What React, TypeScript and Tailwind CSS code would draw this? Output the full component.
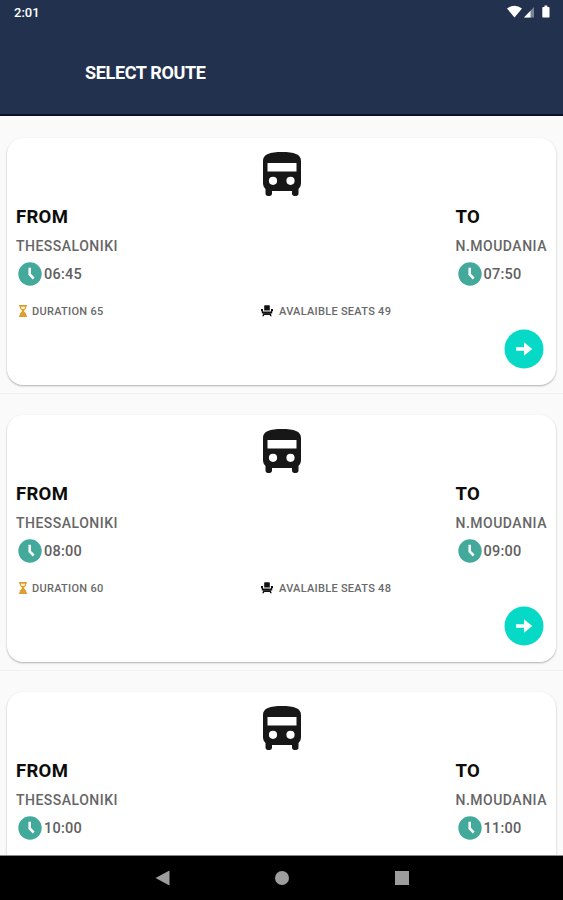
type Trip = { departs: string; arrives: string; duration?: number; seats?: number };

const trips: Trip[] = [
  { departs: "06:45", arrives: "07:50", duration: 65, seats: 49 },
  { departs: "08:00", arrives: "09:00", duration: 60, seats: 48 },
  { departs: "10:00", arrives: "11:00" },
];

function BusIcon() {
  return (
    <svg className="mx-auto block h-11 w-[38px]" viewBox="0 0 38 44" fill="#171717">
      <path
        fillRule="evenodd"
        d="M0 9C0 2 7 0 19 0s19 2 19 9v22c0 2.6-1 4.600-2.500 6v4.500c0 1.500-1 2.500-2.500 2.500h-1.500c-1.500 0-2.500-1-2.500-2.500V39H9v2.500C9 43 8 44 6.500 44H5c-1.500 0-2.500-1-2.500-2.500V37C1 35.600 0 33.600 0 31V9Zm4.500 2v8.500h29V11h-29ZM10 24.700a4.100 4.100 0 1 0 0 8.200 4.100 4.100 0 0 0 0-8.200Zm17.500 0a4.100 4.100 0 1 0 0 8.200 4.100 4.100 0 0 0 0-8.200Z"
      />
    </svg>
  );
}

function ClockIcon() {
  return (
    <svg className="h-6 w-6 shrink-0" viewBox="0 0 24 24">
      <circle cx="12" cy="12" r="11.700" fill="#43a99b" />
      <path d="M11.700 5.800v6.700l4 4" fill="none" stroke="#fff" strokeWidth="2.500" />
    </svg>
  );
}

function HourglassIcon() {
  return (
    <svg className="h-3 w-2 shrink-0" viewBox="0 0 8 12">
      <path d="M0 0h8v1.500H7.200v1.800L4.900 6l2.300 2.700v1.800H8V12H0v-1.500h.8V8.700L3.100 6 .8 3.300V1.500H0V0Z" fill="#dda02e" />
      <path d="M2 1.700h4v1.400L5.200 4H2.800L2 3.100V1.700Z" fill="#fff4d8" />
    </svg>
  );
}

function SeatIcon() {
  return (
    <svg className="h-3 w-3 shrink-0" viewBox="0 0 12 12" fill="#111">
      <path d="M3.200 1q0-.7.700-.7h4.200q.7 0 .7.700v4.500H3.200V1ZM0 4h2v2.500h8V4h2v2.300h-.8v2.200H.8V6.300H0V4Z" />
      <path d="M2.300 8.300h7.400l1 3H9.200l-.5-1.300H3.300l-.5 1.300H1.300l1-3Z" />
    </svg>
  );
}

function Stop({ label, city, time }: { label: string; city: string; time: string }) {
  return (
    <div>
      <h2 className="flex h-10 items-center pt-px text-[18.500px] font-bold leading-none tracking-[0.3px] text-[#0c0c0c]">{label}</h2>
      <p className="h-[17px] whitespace-nowrap text-[14px] font-medium leading-[19px] tracking-[0.500px] text-[#666]">{city}</p>
      <div className="mt-2 flex h-6 items-center gap-[2px] pl-[2px]">
        <ClockIcon />
        <span className="pt-[3px] text-[14.500px] font-medium leading-none tracking-[0.250px] text-[#606060]">{time}</span>
      </div>
    </div>
  );
}

function TripCard({ trip }: { trip: Trip }) {
  return (
    <li className="h-[277px] border-b border-[#f2f2f2] px-[7px] pt-[21px]">
      <article className="h-[247px] rounded-[16px] bg-white px-[9px] pt-[14px] shadow-[0_1px_2px_rgba(0,0,0,0.3)]">
        <BusIcon />
        <div className="mt-px flex justify-between">
          <Stop label="FROM" city="THESSALONIKI" time={trip.departs} />
          <div className="w-[91.500px]">
            <Stop label="TO" city="N.MOUDANIA" time={trip.arrives} />
          </div>
        </div>
        {trip.duration !== undefined && (
          <>
            <div className="mt-[17px] flex h-4 items-center text-[11px] font-medium leading-none tracking-[0.28px] text-[#696969]">
              <div className="flex w-[245px] items-center gap-[5px] pl-[3px]">
                <HourglassIcon />
                <span>DURATION {trip.duration}</span>
              </div>
              <div className="flex items-center gap-[6px]">
                <SeatIcon />
                <span>AVALAIBLE SEATS {trip.seats}</span>
              </div>
            </div>
            <button aria-label="Select trip" className="mr-[3px] ml-auto mt-[10px] flex h-10 w-10 items-center justify-center">
              <svg className="h-10 w-10" viewBox="0 0 40 40">
                <circle cx="20" cy="20" r="19.500" fill="#06d9c6" />
                <path d="M12 18.200h8V13.200l8.200 6.800-8.200 6.800v-5h-8v-3.600Z" fill="#fff" />
              </svg>
            </button>
          </>
        )}
      </article>
    </li>
  );
}

export default function App() {
  return (
    <div className="flex h-[900px] w-[563px] flex-col overflow-hidden bg-[#fafafa] font-['Roboto',sans-serif]">
      <header className="h-[116px] shrink-0 border-b-2 border-[#0b1029] bg-[#22314e] text-white">
        <div className="flex h-6 items-center justify-between pr-[11px] pl-[14px]">
          <span className="text-[13px] font-medium leading-none">2:01</span>
          <svg className="h-4 w-[46px]" viewBox="0 0 46 16" fill="#fff">
            <path d="M1 4.500Q8.500-1 16 4.500L8.500 13.500Z" />
            <path d="M18 13.500 28 3v10.500Z" opacity=".4" />
            <path d="M18 13.500 24.500 6.700v6.800Z" />
            <path d="M37 3h1.500V1.500h2.800V3h1.500q.7 0 .7.700v9.100q0 .7-.7.700H37q-.7 0-.7-.7V3.700q0-.7.700-.7Z" />
          </svg>
        </div>
        <h1 className="mt-[37px] pl-[85px] text-[18px] font-bold leading-6 tracking-[-0.350px]">SELECT ROUTE</h1>
      </header>
      <ul className="min-h-0 flex-1 overflow-hidden pt-px">
        {trips.map((trip) => (
          <TripCard key={trip.departs} trip={trip} />
        ))}
      </ul>
      <nav className="grid h-[45px] shrink-0 grid-cols-3 items-center border-t border-[#888] bg-black pr-[101px] pl-[103px]">
        <svg className="mx-auto h-4 w-4" viewBox="0 0 16 16"><path d="M.5 8 14.500.5v15Z" fill="#9d9d9d" /></svg>
        <svg className="mx-auto h-4 w-4" viewBox="0 0 16 16"><circle cx="8" cy="8" r="7" fill="#9d9d9d" /></svg>
        <svg className="mx-auto h-4 w-4" viewBox="0 0 16 16"><path d="M1 1h14v14H1Z" fill="#9d9d9d" /></svg>
      </nav>
    </div>
  );
}
